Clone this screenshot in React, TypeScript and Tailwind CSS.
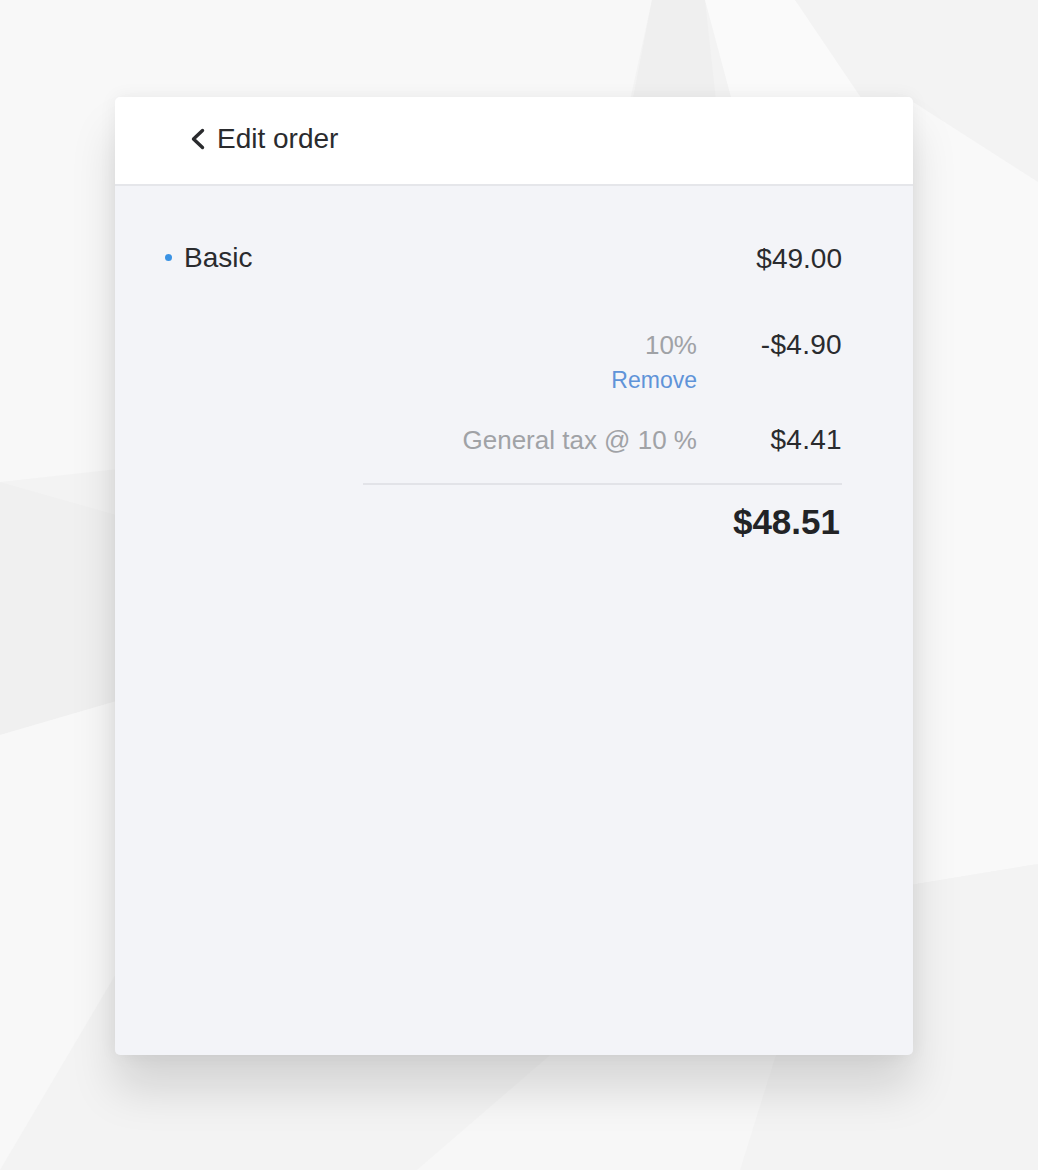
import { useState } from "react";

function Backdrop() {
  return (
    <svg
      className="absolute inset-0 h-full w-full"
      viewBox="0 0 1038 1170"
      preserveAspectRatio="none"
    >
      <rect width="1038" height="1170" fill="#f3f3f3" />
      <polygon points="0,0 652,0 560,420 0,482" fill="#f8f8f8" />
      <polygon points="652,0 705,0 740,320 590,320" fill="#efefef" />
      <polygon points="705,0 795,0 1038,360 820,430" fill="#fafafa" />
      <polygon points="795,0 1038,0 1038,182 910,100" fill="#f3f3f3" />
      <polygon points="910,100 1038,182 1038,864 910,885" fill="#f9f9f9" />
      <polygon points="0,482 120,516 120,700 0,735" fill="#f0f0f0" />
      <polygon points="0,735 120,700 120,967 0,1170" fill="#f8f8f8" />
      <polygon points="614,1000 793,1000 740,1170 417,1170" fill="#f7f7f7" />
      <polygon points="910,885 1038,864 1038,1170 910,1170" fill="#f3f3f3" />
    </svg>
  );
}

function Row({ label, amount, sub }: { label: string; amount: string; sub?: string }) {
  return (
    <div className="flex justify-end">
      <div className="flex flex-col items-end">
        <span className="text-[26px] leading-[32px] text-[#a0a2a6]">{label}</span>
        {sub && (
          <button className="mt-[5px] text-[23px] leading-[28px] text-[#5f93d8]">{sub}</button>
        )}
      </div>
      <span className="w-[145px] text-right text-[28px] leading-[32px] tracking-[0.3px] text-[#2a2b2e]">
        {amount}
      </span>
    </div>
  );
}

export default function App() {
  const [items] = useState([{ name: "Basic", price: "$49.00" }]);

  return (
    <div
      className="relative h-[1170px] w-full overflow-hidden"
      style={{ fontFamily: '"Liberation Sans", Arial, sans-serif' }}
    >
      <Backdrop />
      <div className="relative pl-[115px] pt-[97px]">
        <div className="flex h-[958px] w-[798px] flex-col overflow-hidden rounded-[5px] bg-[#f3f4f8] shadow-[0_35px_45px_rgba(0,0,0,0.13),0_0_18px_rgba(0,0,0,0.06)]">
          <header className="flex h-[89px] items-center gap-[11px] border-b-2 border-[#e5e6ea] bg-white pb-[4px] pl-[75px]">
            <svg width="16" height="22" viewBox="0 0 16 22" fill="none">
              <polyline
                points="12.5,2.5 3.5,11 12.5,19.5"
                stroke="#2a2b2e"
                strokeWidth="3.4"
                strokeLinecap="round"
                strokeLinejoin="round"
              />
            </svg>
            <span className="text-[28px] text-[#2a2b2e]">Edit order</span>
          </header>

          <div className="flex flex-col pl-[50px] pr-[71px] pt-[54px]">
            {items.map((it) => (
              <div key={it.name} className="flex items-center justify-between">
                <div className="flex items-center gap-[12px]">
                  <span className="h-[7px] w-[7px] rounded-full bg-[#3a92e4]" />
                  <span className="text-[28px] leading-[32px] text-[#2a2b2e]">{it.name}</span>
                </div>
                <span className="mt-[3px] text-[28px] leading-[32px] text-[#2a2b2e]">
                  {it.price}
                </span>
              </div>
            ))}

            <div className="mt-[54px]">
              <Row label="10%" amount="-$4.90" sub="Remove" />
            </div>
            <div className="mt-[30px]">
              <Row label="General tax @ 10 %" amount="$4.41" />
            </div>

            <div className="ml-auto mt-[27px] h-[2px] w-[479px] bg-[#e2e3e8]" />

            <div className="mt-[17px] flex justify-end pr-[2px]">
              <span className="text-[35px] font-bold leading-[40px] text-[#222326]">$48.51</span>
            </div>
          </div>
        </div>
      </div>
    </div>
  );
}
